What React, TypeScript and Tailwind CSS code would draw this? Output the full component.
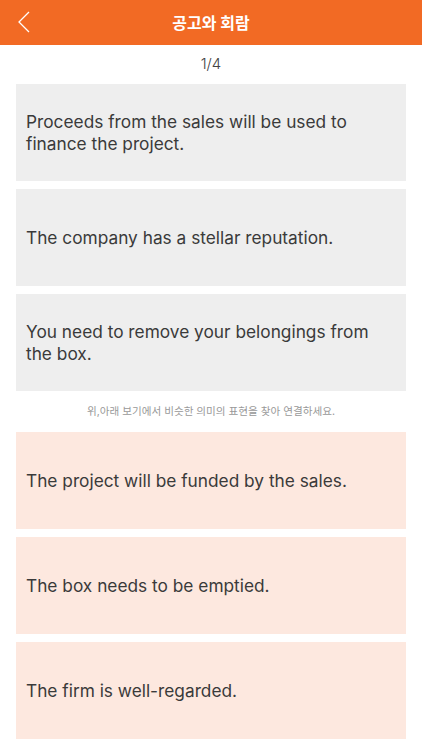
const top = [
  "Proceeds from the sales will be used to finance the project.",
  "The company has a stellar reputation.",
  "You need to remove your belongings from the box.",
]

const bottom = [
  "The project will be funded by the sales.",
  "The box needs to be emptied.",
  "The firm is well-regarded.",
]

function Card({ text, tone }: { text: string; tone: "gray" | "peach" }) {
  return (
    <div
      className={`flex h-[97px] items-center px-[10px] text-[17.3px] leading-[22px] text-[#3a3a3a] ${
        tone === "gray" ? "bg-[#eeeeee]" : "bg-[#fde8df]"
      }`}
    >
      {text}
    </div>
  )
}

export default function App() {
  return (
    <div className="min-h-[750px] w-[422px] bg-white font-['Inter','Noto_Sans_CJK_KR',sans-serif]">
      {/* Header */}
      <div className="relative flex h-[45px] items-center justify-center bg-[#f26a24]">
        <svg
          className="absolute left-[17px] top-[11px]"
          width="14"
          height="22"
          viewBox="0 0 14 22"
          fill="none"
        >
          <path d="M12 1 L2 11 L12 21" stroke="white" strokeWidth="1.3" />
        </svg>
        <span className="text-[16px] font-bold text-white">공고와 회람</span>
      </div>

      <div className="flex h-[39px] items-center justify-center text-[15px] font-light text-[#444]">1/4</div>

      <div className="flex flex-col gap-[8px] px-[16px]">
        {top.map((t) => (
          <Card key={t} text={t} tone="gray" />
        ))}
      </div>

      <div className="flex h-[41px] items-center justify-center text-[10.6px] text-[#999]">
        위,아래 보기에서 비슷한 의미의 표현을 찾아 연결하세요.
      </div>

      <div className="flex flex-col gap-[8px] px-[16px]">
        {bottom.map((t) => (
          <Card key={t} text={t} tone="peach" />
        ))}
      </div>
    </div>
  )
}
